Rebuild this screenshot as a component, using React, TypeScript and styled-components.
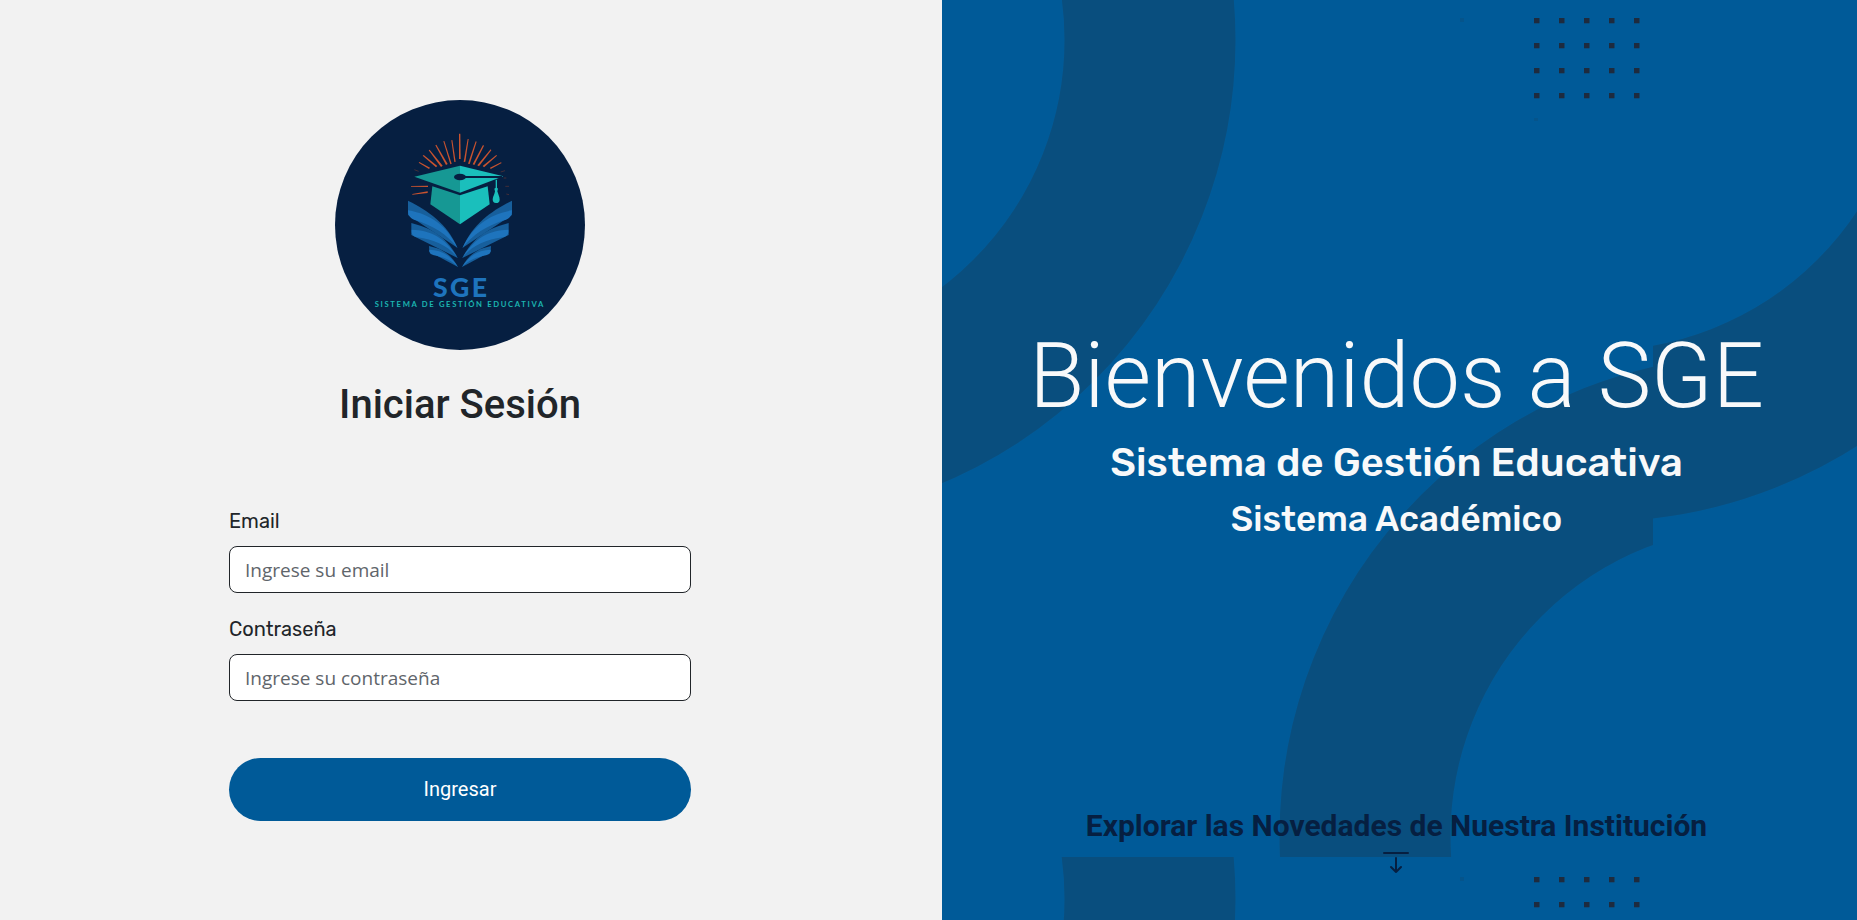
import React from "react";
import styled, { createGlobalStyle } from "styled-components";

const GlobalStyle = createGlobalStyle`
  *, *::before, *::after { box-sizing: border-box; }
  body {
    margin: 0;
    color: #212529;
    background: #f2f2f2;
    font-family: Roboto, "Liberation Sans", sans-serif;
  }
`;

const Page = styled.div`
  display: grid;
  grid-template-columns: minmax(0, 942fr) minmax(0, 915fr);
  min-height: 100vh;
`;

const LoginPanel = styled.main`
  display: flex;
  flex-direction: column;
  align-items: center;
  padding: 100px 22px 64px 0;
`;

const LogoImage = styled.svg`
  display: block;
  width: 250px;
  height: 250px;
`;

const LoginTitle = styled.h2`
  margin: 31px 0 0;
  font-size: 40px;
  line-height: 48px;
  font-weight: 500;
`;

const LoginForm = styled.form`
  display: flex;
  flex-direction: column;
  width: calc(50% + 2px);
  min-width: 280px;
  margin-top: 77px;
`;

const Field = styled.div`
  display: flex;
  flex-direction: column;
  gap: 10px;
  margin-bottom: 21px;
`;

const FieldLabel = styled.label`
  font-family: Rubik, Roboto, sans-serif;
  font-size: 20px;
  line-height: 30px;
`;

const FieldInput = styled.input`
  width: 100%;
  height: 47px;
  padding: 8px 15px;
  border: 1px solid #212529;
  border-radius: 8px;
  background: #fff;
  color: #212529;
  font-family: "Segoe UI", "Open Sans", "Noto Sans", sans-serif;
  font-size: 19px;

  &::placeholder {
    color: #5f656b;
    opacity: 1;
  }
`;

const SubmitButton = styled.button`
  height: 63px;
  margin-top: 36px;
  padding: 0 16px 2px;
  border: 0;
  border-radius: 32px;
  background: #005a98;
  color: #fff;
  font-family: Roboto, sans-serif;
  font-size: 20px;
  cursor: pointer;
`;

const WelcomePanel = styled.section`
  position: relative;
  display: flex;
  flex-direction: column;
  align-items: center;
  padding: 323px 6px 46px 0;
  background: #005a98;
  color: #f8f9fa;
  text-align: center;
`;

const Backdrop = styled.svg`
  position: absolute;
  inset: 0;
  width: 100%;
  height: 100%;
`;

const WelcomeText = styled.div`
  position: relative;
  flex: 1;
`;

const WelcomeTitle = styled.h1`
  margin: 0;
  font-size: 90px;
  line-height: 108px;
  font-weight: 300;
`;

const Tagline = styled.p<{ $size: number }>`
  margin: 8px 0 0;
  font-family: Rubik, Inter, sans-serif;
  font-size: ${(p) => p.$size}px;
  line-height: 48px;
  font-weight: 500;
`;

const NewsLink = styled.a`
  position: relative;
  display: flex;
  flex-direction: column;
  align-items: center;
  gap: 6px;
  color: #061f41;
  font-size: 30px;
  line-height: 36px;
  font-weight: 700;
  text-decoration: none;
`;

const rays = [
  "387,116 391,116 392,192 387,192",
  "364,136 367,135 377,200 373,201",
  "340,139 343,138 365,206 361,208",
  "316,151 319,149 353,207 348,210",
  "296,166 299,164 338,212 333,216",
  "278,182 281,180 322,213 318,217",
  "266,203 268,201 300,218 297,222",
  "413,132 416,132 406,200 401,201",
  "437,139 440,140 419,207 414,206",
  "459,150 462,152 433,210 428,208",
  "482,163 484,166 447,214 442,211",
  "499,180 501,182 462,217 458,213",
  "513,202 515,204 482,222 480,218",
  "243,273 294,272 294,276 243,275",
  "247,297 293,289 293,294 247,299",
];

function Logo() {
  const wing = (
    <>
      <path fill="#175f9c" d="M234 317C292 345 352 386 382 458L234 360Z" />
      <path fill="#1e74bd" d="M234 346C304 358 352 394 383 460C353 419 310 391 252 374C240 370 234 361 234 346Z" />
      <path fill="#175f9c" d="M244 384C300 398 350 424 383 489L244 420Z" />
      <path fill="#1e74bd" d="M245 404C304 406 348 430 383 489C354 451 313 434 262 427C248 423 244 418 245 404Z" />
      <path fill="#175f9c" d="M297 453C330 460 361 473 384 516L298 470Z" />
      <path fill="#1e74bd" d="M298 464C330 466 356 474 384 516C359 492 341 488 312 481C302 478 297 474 298 464Z" />
    </>
  );
  return (
    <LogoImage viewBox="15 15 750 750" role="img" aria-label="SGE Sistema de Gestión Educativa">
      <circle cx="390" cy="390" r="375" fill="#061f41" />
      <g fill="#c9532f">
        {rays.map((points) => (
          <polygon key={points} points={points} />
        ))}
      </g>
      <g stroke="#8a402f" strokeWidth="2" opacity="0.7">
        <path d="M253 224L266 229M525 227L512 231M537 274H526M537 299L529 297M529 249H521" />
      </g>
      <path fill="#169894" d="M253 245L390 212V293Z" />
      <path fill="#1abfbc" d="M390 212L520 244L390 293Z" />
      <path fill="#169894" d="M307 274L390 301V388L301 328Z" />
      <path fill="#1abfbc" d="M390 301L473 274L479 328L390 388Z" />
      <ellipse cx="390" cy="246" rx="18" ry="10" fill="#061f41" />
      <path d="M398 243H516V249H398Z" fill="#061f41" />
      <path fill="#1abfbc" d="M497 254H501V278L504 281L502 289C505 299 509 306 509 314C509 321 505 324 498 324S488 320 488 313C489 304 494 297 495 289L493 281L497 278Z" />
      {wing}
      <g transform="matrix(-1 0 0 1 780 0)">{wing}</g>
      <text fontFamily="Lato, sans-serif">
        <tspan x="309" y="606" fill="#1e74bd" fontWeight="900" fontSize="80" letterSpacing="7">
          SGE
        </tspan>
        <tspan x="134" y="636" fill="#1bb5b0" fontWeight="700" fontSize="23" letterSpacing="5">
          SISTEMA DE GESTIÓN EDUCATIVA
        </tspan>
      </text>
    </LogoImage>
  );
}

const dotColumns = [725, 750, 775, 800, 825];
const dotRows = [20, 45, 70, 95];

function PatternBackdrop() {
  return (
    <Backdrop aria-hidden="true">
      <defs>
        <pattern id="tile" x="-133" y="-2" width="844" height="859" patternUnits="userSpaceOnUse">
          <g fill="none" stroke="#094e7e" strokeWidth="171">
            <circle cx="-55" cy="42" r="396" />
            <circle cx="952" cy="838" r="396" />
          </g>
          <g fill="#1e2b3e">
            {dotRows.map((y) => dotColumns.map((x) => <rect key={`${x}-${y}`} x={x} y={y} width="5.5" height="5.3" />))}
          </g>
          <g fill="#1e2b3e" opacity="0.15">
            <rect x="651" y="20" width="4" height="4" />
            <rect x="725" y="120" width="4" height="3" />
          </g>
        </pattern>
      </defs>
      <rect width="100%" height="100%" fill="url(#tile)" />
    </Backdrop>
  );
}

export default function App() {
  return (
    <>
      <GlobalStyle />
      <Page>
        <LoginPanel>
          <Logo />
          <LoginTitle>Iniciar Sesión</LoginTitle>
          <LoginForm onSubmit={(e) => e.preventDefault()}>
            <Field>
              <FieldLabel htmlFor="email">Email</FieldLabel>
              <FieldInput id="email" type="email" placeholder="Ingrese su email" />
            </Field>
            <Field>
              <FieldLabel htmlFor="password">Contraseña</FieldLabel>
              <FieldInput id="password" type="password" placeholder="Ingrese su contraseña" />
            </Field>
            <SubmitButton type="submit">Ingresar</SubmitButton>
          </LoginForm>
        </LoginPanel>
        <WelcomePanel>
          <PatternBackdrop />
          <WelcomeText>
            <WelcomeTitle>Bienvenidos a SGE</WelcomeTitle>
            <Tagline $size={40}>Sistema de Gestión Educativa</Tagline>
            <Tagline $size={35}>Sistema Académico</Tagline>
          </WelcomeText>
          <NewsLink href="#novedades">
            Explorar las Novedades de Nuestra Institución
            <svg width="26" height="24" viewBox="0 0 26 24" fill="none" stroke="currentColor" strokeWidth="2" strokeLinecap="round" strokeLinejoin="round" aria-hidden="true">
              <path d="M1 3H25M13 8V22M8 17L13 22L18 17" />
            </svg>
          </NewsLink>
        </WelcomePanel>
      </Page>
    </>
  );
}
